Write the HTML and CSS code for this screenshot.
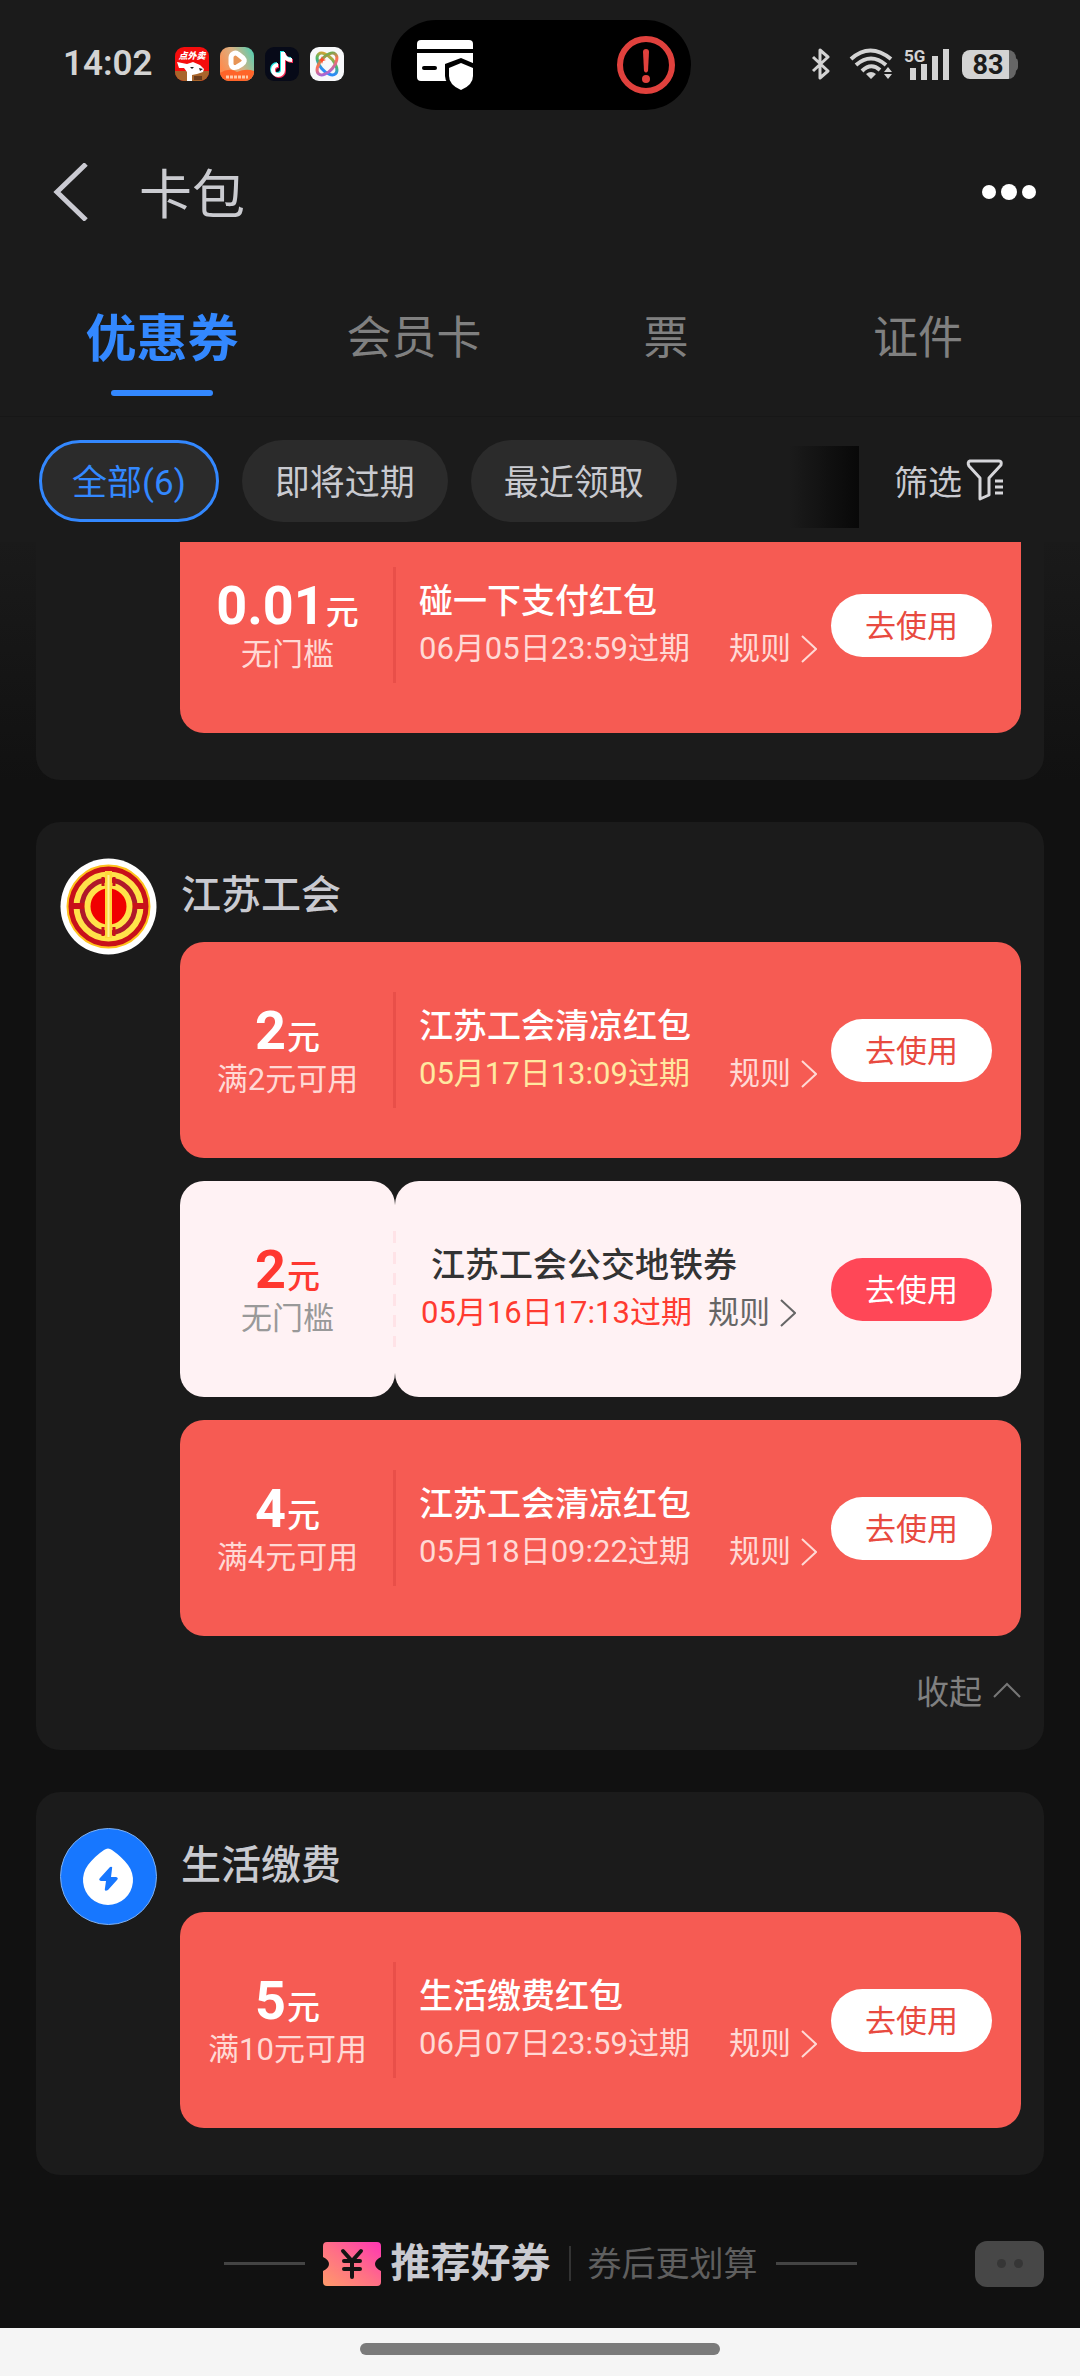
FILE: index.html
```html
<!DOCTYPE html>
<html lang="zh-CN">
<head>
<meta charset="utf-8">
<meta name="viewport" content="width=device-width, initial-scale=1">
<title>卡包</title>
<link rel="stylesheet" href="styles.css">
</head>
<body>
<svg class="sprite" aria-hidden="true">
  <symbol id="chevron" viewBox="0 0 16 28"><path d="M1 1l14 13L1 27" fill="none" stroke="currentColor" stroke-width="2"/></symbol>
</svg>

<div class="status">
  <div class="status-left">
    <span class="clock">14:02</span>
    <svg class="app" viewBox="0 0 34 34" aria-hidden="true">
      <defs><clipPath id="appclip"><rect width="34" height="34" rx="9"/></clipPath></defs>
      <g clip-path="url(#appclip)">
        <rect width="34" height="34" fill="#f50d0d"/>
        <rect y="24" width="34" height="10" fill="#a8652b"/>
        <path d="M2 15l2 6h5l3 4v9h5v-6l5-1 6-2 1-3-4-4-7-3-6 2-5-1z" fill="#fff"/>
        <path d="M15 20h4l-2 2zM24 21l4 1-3 2z" fill="#222"/>
        <path d="M19 29h8v4h-8z" fill="#6a3c1c"/>
        <text x="17" y="12" text-anchor="middle" class="app-text">点外卖</text>
      </g>
    </svg>
    <svg class="app" viewBox="0 0 34 34" aria-hidden="true">
      <defs><linearGradient id="vid" x1="0" y1=".6" x2="1" y2=".1"><stop offset="0" stop-color="#ff8a4c"/><stop offset=".5" stop-color="#d9b183"/><stop offset="1" stop-color="#4fd0b4"/></linearGradient></defs>
      <g clip-path="url(#appclip)">
        <rect width="34" height="34" fill="url(#vid)"/>
        <path d="M0 26q9-6 17-1 9-4 17-1v10H0z" fill="#ff6429"/>
        <path d="M13 7q2-2 5 0l5 4q3 3-1 6l-5 3q-5 2-6-3V11q0-3 2-4z" fill="#e79556" stroke="#fff" stroke-width="5" stroke-linejoin="round"/>
        <path d="M6 30h22" stroke="#ffc9a8" stroke-width="3" stroke-dasharray="3 1"/>
      </g>
    </svg>
    <svg class="app" viewBox="0 0 34 34" aria-hidden="true">
      <rect width="34" height="34" rx="9" fill="#070a18"/>
      <g fill="none" stroke-width="4">
        <path d="M17 4v18a5 5 0 1 1-5-5M17 5q2 7 9 7" stroke="#27e6e3"/>
        <path d="M19 6v18a5 5 0 1 1-5-5M19 7q2 7 9 7" stroke="#fb2c56"/>
        <path d="M18 5v18a5 5 0 1 1-5-5M18 6q2 7 9 7" stroke="#fff"/>
      </g>
    </svg>
    <svg class="app" viewBox="0 0 34 34" aria-hidden="true">
      <defs><linearGradient id="orb" x1="0" y1="0" x2="1" y2="1"><stop offset="0" stop-color="#ff9c22"/><stop offset=".45" stop-color="#48b86a"/><stop offset=".75" stop-color="#2a8cf5"/><stop offset="1" stop-color="#2a8cf5"/></linearGradient>
      <linearGradient id="orb2" x1="1" y1="0" x2="0" y2="1"><stop offset="0" stop-color="#3cc04c"/><stop offset=".45" stop-color="#ff7052"/><stop offset="1" stop-color="#8a62ff"/></linearGradient></defs>
      <rect width="34" height="34" rx="9" fill="#f7f8fa"/>
      <g fill="none" stroke-width="3">
        <ellipse cx="17" cy="17" rx="13" ry="7" transform="rotate(50 17 17)" stroke="url(#orb)"/>
        <ellipse cx="17" cy="17" rx="13" ry="7" transform="rotate(-50 17 17)" stroke="url(#orb2)"/>
      </g>
      <path d="M12 9l1 3 3 1-3 1-1 3-1-3-3-1 3-1z" fill="#ff4d2a"/>
    </svg>
  </div>
  <div class="island">
    <svg width="58" height="52" viewBox="0 0 58 52" aria-hidden="true">
      <path d="M5 1h48q4 0 4 4v5H1V5q0-4 4-4z" fill="#fff"/>
      <path d="M1 14h56v27q0 1-4 1H5q-4 0-4-4z" fill="#fff"/>
      <path d="M8 29h11" stroke="#000" stroke-width="4" stroke-linecap="round"/>
      <path d="M45 19l14 6v12q0 10-14 16Q29 47 29 37V25z" fill="#000"/>
      <path d="M45 24l12 5v8q0 9-12 14-12-5-12-14v-8z" fill="#fff"/>
    </svg>
    <svg width="60" height="60" viewBox="0 0 60 60" aria-hidden="true">
      <circle cx="30" cy="30" r="26" fill="none" stroke="#e0413d" stroke-width="6"/>
      <path d="M27 17q0-3 3-3t3 3l-1 19q-2 3-4 0z" fill="#e0413d"/>
      <circle cx="30" cy="44" r="4" fill="#e0413d"/>
    </svg>
  </div>
  <div class="status-right">
    <svg width="20" height="32" viewBox="0 0 20 32" aria-hidden="true"><path d="M2 9l15 14-8 7V2l8 7L2 23" fill="none" stroke="#d3d3d3" stroke-width="3" stroke-linejoin="round"/></svg>
    <svg class="wifi" width="46" height="32" viewBox="0 0 46 32" aria-hidden="true">
      <g fill="none" stroke="#d3d3d3" stroke-width="4"><path d="M2 11q19-17 40 0"/><path d="M7 17q15-13 30 0"/><path d="M13 23q9-9 18-1"/></g>
      <path d="M22 31l-5-5q5-4 10 0zM39 19l4 5h-8zM39 31l4-5h-8z" fill="#d3d3d3"/>
    </svg>
    <svg class="signal" width="46" height="34" viewBox="0 0 46 34" aria-hidden="true">
      <path d="M6 21h6v12H6zM17 17h6v16h-6zM28 9h6v24h-6zM39 2h6v31h-6z" fill="#d3d3d3"/>
      <text x="0" y="15" class="net">5G</text>
    </svg>
    <span class="battery"><span class="level">83</span></span>
  </div>
</div>

<header class="titlebar">
  <button class="icon-btn back" aria-label="返回"><svg width="36" height="58" viewBox="0 0 36 58"><path d="M33 1L4 29l29 28" fill="none" stroke="#cacad2" stroke-width="5"/></svg></button>
  <h1>卡包</h1>
  <button class="icon-btn more" aria-label="更多"><svg width="54" height="18" viewBox="0 0 54 18"><circle cx="7" cy="9" r="7"/><circle cx="27" cy="9" r="8"/><circle cx="47" cy="9" r="7"/></svg></button>
</header>

<nav class="tabs">
  <button class="tab active">优惠券</button>
  <button class="tab">会员卡</button>
  <button class="tab">票</button>
  <button class="tab">证件</button>
</nav>

<div class="filters">
  <button class="chip selected">全部(6)</button>
  <button class="chip">即将过期</button>
  <button class="chip">最近领取</button>
  <span class="fade"></span>
  <button class="filter">筛选<svg width="38" height="42" viewBox="0 0 38 42" aria-hidden="true"><g fill="none" stroke="#d6d6da" stroke-width="3" stroke-linejoin="round"><path d="M4 2h29q3 0 2 4L23 19v17l-9 4V19L3 7q-2-4 1-5z"/><path d="M29 22h8M29 28h8M29 34h8"/></g></svg></button>
</div>

<main class="list">
  <section class="group first">
    <div class="coupons">
      <article class="coupon">
        <div class="value"><p class="amount">0.01<span>元</span></p><p class="limit">无门槛</p></div>
        <div class="detail"><h3>碰一下支付红包</h3><p class="meta"><time>06月05日23:59过期</time><a href="#rules">规则<svg><use href="#chevron"/></svg></a></p></div>
        <button class="use">去使用</button>
      </article>
    </div>
  </section>

  <section class="group">
    <svg class="avatar" viewBox="0 0 97 97" aria-hidden="true">
      <circle cx="48.500" cy="48.500" r="48" fill="#fff"/>
      <circle cx="48.500" cy="48.500" r="41" fill="#c8101a" stroke="#ffc21c" stroke-width="2"/>
      <circle cx="48.500" cy="48.500" r="32" fill="#b0182a" stroke="#ffe34a" stroke-width="6"/>
      <path d="M12 45h14v6H12zM71 45h14v6H71z" fill="#c8101a"/>
      <circle cx="48.500" cy="48.500" r="21" fill="#f00000" stroke="#ffe34a" stroke-width="6"/>
      <path d="M43 19v9M54 19v9M43 69v9M54 69v9" stroke="#c8101a" stroke-width="3"/>
      <path d="M48.500 13v67" stroke="#ffd83a" stroke-width="7"/>
      <path d="M48.500 17v62" stroke="#fff09a" stroke-width="2"/>
    </svg>
    <div class="coupons">
      <h2>江苏工会</h2>
      <article class="coupon">
        <div class="value"><p class="amount">2<span>元</span></p><p class="limit">满2元可用</p></div>
        <div class="detail"><h3>江苏工会清凉红包</h3><p class="meta"><time class="soon">05月17日13:09过期</time><a href="#rules">规则<svg><use href="#chevron"/></svg></a></p></div>
        <button class="use">去使用</button>
      </article>
      <article class="coupon light">
        <div class="value"><p class="amount">2<span>元</span></p><p class="limit">无门槛</p></div>
        <div class="detail"><h3>江苏工会公交地铁券</h3><p class="meta"><time>05月16日17:13过期</time><a href="#rules">规则<svg><use href="#chevron"/></svg></a></p></div>
        <button class="use">去使用</button>
      </article>
      <article class="coupon">
        <div class="value"><p class="amount">4<span>元</span></p><p class="limit">满4元可用</p></div>
        <div class="detail"><h3>江苏工会清凉红包</h3><p class="meta"><time>05月18日09:22过期</time><a href="#rules">规则<svg><use href="#chevron"/></svg></a></p></div>
        <button class="use">去使用</button>
      </article>
      <button class="collapse">收起<svg width="28" height="16" viewBox="0 0 28 16" aria-hidden="true"><path d="M1 15L14 2l13 13" fill="none" stroke="#777" stroke-width="2"/></svg></button>
    </div>
  </section>

  <section class="group">
    <svg class="avatar" viewBox="0 0 97 97" aria-hidden="true">
      <circle cx="48.500" cy="48.500" r="48" fill="#1777ff" stroke="#7fb0f0" stroke-width="1"/>
      <path d="M44 22q4-3 8 0 10 7 16 15a25 25 0 1 1-40 0q7-9 16-15z" fill="#fff"/>
      <path d="M50 39q3-1 2 2l-1 8h5q3 1 1 3l-9 10q-4 2-3-2l1-7h-5q-3-1-1-3z" fill="#1777ff"/>
    </svg>
    <div class="coupons">
      <h2>生活缴费</h2>
      <article class="coupon">
        <div class="value"><p class="amount">5<span>元</span></p><p class="limit">满10元可用</p></div>
        <div class="detail"><h3>生活缴费红包</h3><p class="meta"><time>06月07日23:59过期</time><a href="#rules">规则<svg><use href="#chevron"/></svg></a></p></div>
        <button class="use">去使用</button>
      </article>
    </div>
  </section>
</main>

<footer class="recommend">
  <div class="rec-title">
    <i class="rule"></i>
    <svg class="ticket" width="58" height="44" viewBox="0 0 58 44" aria-hidden="true">
      <defs><linearGradient id="tk" x1="0" y1="1" x2="1" y2="0"><stop offset="0" stop-color="#ff9a6a"/><stop offset=".5" stop-color="#ff6f86"/><stop offset="1" stop-color="#ff35b5"/></linearGradient></defs>
      <path d="M4 0h50q4 0 4 4v11q-6 3-6 7t6 7v11q0 4-4 4H4q-4 0-4-4V29q6-3 6-7t-6-7V4q0-4 4-4z" fill="url(#tk)"/>
      <path d="M20 9l9 10 9-10M29 19v16M21 19h16M21 27h16" fill="none" stroke="#141414" stroke-width="4" stroke-linecap="round"/>
    </svg>
    <strong>推荐好券</strong>
    <i class="bar"></i>
    <span class="rec-sub">券后更划算</span>
    <i class="rule"></i>
  </div>
  <button class="bot" aria-label="助手"><i></i><i></i></button>
</footer>

<div class="navbar"><span class="handle"></span></div>
</body>
</html>
```
FILE: styles.css
```css
* { box-sizing: border-box; margin: 0; padding: 0; }

body {
  min-height: 100vh;
  display: flex;
  flex-direction: column;
  background: #111;
  color: #c9cad0;
  font-family: Roboto, "Noto Sans CJK SC", sans-serif;
}

button { border: 0; background: none; font: inherit; color: inherit; cursor: pointer; }
a { color: inherit; text-decoration: none; }
svg { display: block; flex: none; }
.sprite { position: absolute; width: 0; height: 0; }

/* status bar */
.status {
  display: grid;
  grid-template-columns: 1fr 300px 1fr;
  padding: 20px 62px 18px 63px;
  background: #1b1b1b;
}
.status-left, .status-right { display: flex; align-items: center; padding-bottom: 2px; }
.status-left { gap: 11px; }
.status-right { justify-content: flex-end; }
.clock { width: 101px; color: #d3d3d3; font-size: 35px; font-weight: 600; line-height: 40px; }
.app { width: 34px; height: 34px; }
.app-text { font: italic 900 9px "Noto Sans CJK SC", sans-serif; fill: #fff; }
.island {
  display: flex;
  align-items: center;
  justify-content: space-between;
  height: 90px;
  padding: 0 15px 0 25px;
  border-radius: 45px;
  background: #000;
}
.wifi { margin-left: 18px; }
.signal { margin: 0 12px 0 9px; }
.net { font: 700 17px Roboto, sans-serif; fill: #d3d3d3; }
.battery {
  position: relative;
  width: 56px;
  height: 29px;
}
.battery::before {
  content: "";
  position: absolute;
  inset: 0 2px 0 0;
  border-radius: 8px;
  background: linear-gradient(90deg, #d3d3d3 47px, #666 47px);
}
.battery::after {
  content: "";
  position: absolute;
  right: 0;
  top: 8px;
  width: 4px;
  height: 13px;
  border-radius: 0 4px 4px 0;
  background: #666;
}
.level {
  position: relative;
  display: block;
  width: 52px;
  text-align: center;
  color: #1b1b1b;
  font-size: 27px;
  font-weight: 700;
  line-height: 30px;
}

/* title bar and tabs */
.titlebar {
  display: flex;
  align-items: center;
  height: 128px;
  padding: 0 44px 0 53px;
  background: #1b1b1b;
}
h1 { margin-left: 50px; color: #cacbd0; font-size: 53px; font-weight: 400; line-height: 60px; padding-top: 7px; }
.more { margin-left: auto; fill: #fff; }
.tabs {
  display: grid;
  grid-template-columns: repeat(4, 1fr);
  height: 161px;
  padding: 0 36px;
  background: #1b1b1b;
  border-bottom: 1px solid #171717;
}
.tab { position: relative; padding-bottom: 3px; color: #808080; font-size: 45px; }
.tab.active { color: #3388ff; font-size: 51px; font-weight: 600; }
.tab.active::after {
  content: "";
  position: absolute;
  left: calc(50% - 51px);
  bottom: 20px;
  width: 102px;
  height: 6px;
  border-radius: 3px;
  background: #3388ff;
}

/* filter chips */
.filters {
  display: flex;
  align-items: flex-start;
  gap: 23px;
  padding: 23px 76px 14px 39px;
  background: #1b1b1b;
}
.chip {
  height: 82px;
  padding: 0 33px 3px;
  border-radius: 41px;
  background: #2b2b2b;
  font-size: 35px;
}
.chip.selected { padding: 0 30px 3px; border: 3px solid #3388ff; color: #3388ff; }
.fade {
  width: 70px;
  height: 82px;
  margin: 6px 12px 0 auto;
  background: linear-gradient(90deg, #1b1b1b, #080808);
}
.filter { display: flex; align-items: center; gap: 4px; height: 82px; padding-bottom: 2px; font-size: 34px; }

/* coupon list */
.list {
  display: flex;
  flex-direction: column;
  gap: 42px;
  padding: 0 36px;
  overflow: hidden;
  background: linear-gradient(#1a1a1a, #111 240px);
}
.group {
  display: flex;
  align-items: flex-start;
  gap: 23px;
  padding: 36px 23px 47px 24px;
  border-radius: 24px;
  background: #1b1b1b;
}
/* scrolled partly under the filter bar */
.group.first { margin-top: -61px; padding-left: 144px; }
.avatar { width: 97px; height: 97px; }
.coupons { flex: 1; display: flex; flex-direction: column; gap: 23px; }
h2 { padding: 12px 0 0 1px; font-size: 40px; font-weight: 500; line-height: 52px; margin-bottom: -3px; }

.coupon {
  display: flex;
  align-items: center;
  height: 216px;
  padding-right: 29px;
  border-radius: 24px;
  background: #f65b53;
  color: #fff;
}
.value {
  position: relative;
  width: 215px;
  align-self: stretch;
  display: flex;
  flex-direction: column;
  justify-content: center;
  padding-top: 4px;
  text-align: center;
}
.value::after {
  content: "";
  position: absolute;
  right: -1px;
  top: 50px;
  width: 3px;
  height: 116px;
  background: #e94f49;
}
.amount { font-size: 54px; font-weight: 700; line-height: 56px; }
.amount span { margin-left: 1px; font-size: 33px; font-weight: 500; line-height: 33px; }
.limit { color: #ffd9d5; font-size: 31px; line-height: 42px; }
.detail { flex: 1; padding-left: 24px; }
h3 { font-size: 34px; font-weight: 500; line-height: 48px; }
.meta { display: flex; justify-content: space-between; color: #ffd9d5; font-size: 31px; line-height: 48px; white-space: nowrap; }
.meta a { display: flex; align-items: center; gap: 10px; margin-right: 14px; }
.meta svg { width: 16px; height: 28px; }
.soon { color: #ffe8a0; }
.use {
  width: 161px;
  height: 63px;
  padding-bottom: 3px;
  border-radius: 32px;
  background: #fff;
  color: #e84a40;
  font-size: 31px;
}

.coupon.light { background: none; padding: 0 29px 0 0; position: relative; isolation: isolate; color: #333; }
.light::before {
  content: "";
  position: absolute;
  inset: 0 0 0 215px;
  z-index: -1;
  border-radius: 24px;
  background: #fff2f4;
}
.light .value { border-radius: 24px; background: #fff2f4; }
.light .value::after { background: repeating-linear-gradient(#ffe3e7 0 12px, #fff2f4 12px 21px); }
.light .amount { color: #ff3830; }
.light .limit { color: #999; }
.light h3 { padding-left: 10px; }
.light .detail { padding-left: 26px; }
.light .meta { color: #666; justify-content: flex-start; gap: 16px; }
.light time { color: #ff3b30; }
.light .use { background: #ff4757; color: #fff; }

.collapse {
  display: flex;
  align-items: center;
  align-self: flex-end;
  gap: 11px;
  height: 44px;
  margin-top: 9px;
  margin-bottom: -9px;
  color: #808080;
  font-size: 33px;
}

/* recommendation heading */
.recommend {
  display: grid;
  grid-template-columns: 1fr auto 1fr;
  align-items: center;
  flex: 1;
  padding: 24px 36px 0;
}
.rec-title { grid-column: 2; display: flex; align-items: center; }
.rule { width: 81px; height: 3px; background: #444; }
.ticket { margin: 0 10px 0 18px; }
.rec-title strong { font-size: 40px; font-weight: 600; line-height: 52px; }
.bar { width: 2px; height: 35px; margin: 0 17px 0 18px; background: #333; }
.rec-sub { margin-right: 18px; color: #5f5f5f; font-size: 34px; line-height: 48px; }
.bot {
  justify-self: end;
  display: flex;
  align-items: center;
  justify-content: center;
  gap: 8px;
  width: 69px;
  height: 46px;
  border-radius: 12px;
  background: #474747;
}
.bot i { width: 9px; height: 9px; border-radius: 50%; background: #363636; }

.navbar { display: flex; justify-content: center; padding: 15px 0 21px; background: #f5f5f5; }
.handle { width: 360px; height: 12px; border-radius: 6px; background: #7a7a7a; }
```
